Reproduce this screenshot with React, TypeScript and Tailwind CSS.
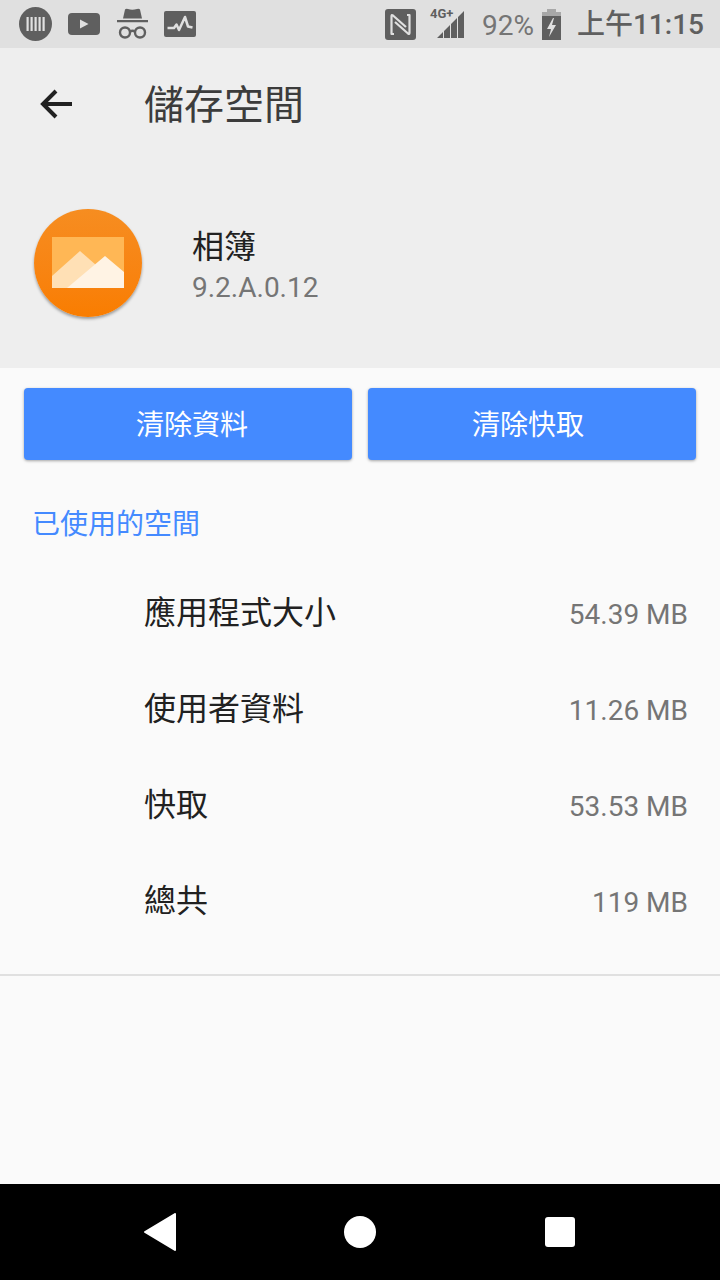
function StatusLeft() {
  return (
    <div className="flex items-center gap-[16px]">
      {/* notification icons */}
      <svg width="33" height="34" viewBox="0 0 33 34" fill="#5f5f5f">
        <ellipse cx="16.500" cy="17" rx="16.500" ry="17" />
        <path d="M7.500 10h2.200v14H7.500zM11.500 10h2.200v14h-2.200zM15.500 10h2.200v14h-2.200zM19.500 10h2.200v14h-2.200zM23.500 10h2.200v14h-2.200z" fill="#e0e0e0" />
      </svg>
      <svg width="32" height="24" viewBox="0 0 32 24">
        <rect width="32" height="22" y="1" rx="4" fill="#5f5f5f" />
        <path d="M12 7.500l8.500 4.500-8.500 4.500z" fill="#e0e0e0" />
      </svg>
      <svg width="33" height="34" viewBox="0 0 33 34" fill="#5f5f5f" className="-mr-[1px]">
        <path d="M9 2.500q1-1 3-.5 4 1.500 9 0 2-.5 3 .5l2 9H7zM1 13h31v2.200H1z" />
        <g fill="none" stroke="#5f5f5f" strokeWidth="2.400">
          <circle cx="9" cy="25.500" r="5" />
          <circle cx="24" cy="25.500" r="5" />
          <path d="M14 24.500q2.500-1.500 5 0" />
        </g>
      </svg>
      <svg width="32" height="26" viewBox="0 0 32 26">
        <rect width="32" height="26" rx="2" fill="#5f5f5f" />
        <path d="M3.500 17H10l2.500-3.500 2.500 5.500 6-13 3 9.500 4.500 1" fill="none" stroke="#e0e0e0" strokeWidth="2.500" strokeLinejoin="round" />
      </svg>
    </div>
  );
}

function StatusRight() {
  return (
    <div className="flex items-center">
      <svg width="31" height="31" viewBox="0 0 31 31" className="mr-[14px]">
        <rect width="31" height="31" rx="3" fill="#5f5f5f" />
        <g fill="none" stroke="#e0e0e0" strokeWidth="2.200" strokeLinejoin="round">
          <path d="M9 25H6.500V7q0-1.500 1.500-.5L21 18" />
          <path d="M22 6h2.500v18q0 1.500-1.500.5L10 13" />
        </g>
      </svg>
      <div className="relative w-[36px] h-[36px] mr-[16px]">
        <span className="absolute left-0 top-[1px] text-[13px] leading-[14px] font-bold text-[#5f5f5f]">4G+</span>
        <svg width="36" height="36" viewBox="0 0 36 36" fill="#5f5f5f">
          <path d="M7 32l6-6v6zM14 32V25l6-6v13zM21 32V18l6-6v20zM28 32V11l6-6v27z" />
        </svg>
      </div>
      <span className="text-[28px] leading-[34px] pt-[3px] text-[#757575] mr-[8px]">92%</span>
      <svg width="19" height="31" viewBox="0 0 19 31" className="mr-[16px]">
        <path d="M5 0h9v3h5v4H0V3h5z" fill="#a8a8a8" />
        <path d="M0 7h19v24H0z" fill="#5f5f5f" />
        <path d="M11 9L5 20h4l-2 8 7-12h-4l2-7z" fill="#e0e0e0" />
      </svg>
      <span className="text-[28px] leading-[34px] pt-[1px] font-medium text-[#5f5f5f]">上午11:15</span>
    </div>
  );
}

function AppIcon() {
  return (
    <div className="w-[108px] h-[108px] rounded-full bg-gradient-to-b from-[#f68d20] to-[#f97d00] shadow-[0_2px_3px_rgba(0,0,0,0.35)] flex items-center justify-center">
      <svg width="72" height="51" viewBox="0 0 72 51" className="mb-[2px]">
        <rect width="72" height="51" fill="#ffb755" />
        <path d="M0 39L28 14l16 14-28 23H0z" fill="#ffe0b5" />
        <path d="M15 51l38-32 19 16v16z" fill="#fff3e4" />
      </svg>
    </div>
  );
}

function StorageRow({ label, value }: { label: string; value: string }) {
  return (
    <div className="flex items-center justify-between h-[96px] pl-[144px] pr-[32px]">
      <span className="text-[32px] text-[#212121]">{label}</span>
      <span className="text-[28px] pt-[4px] text-[#757575]">{value}</span>
    </div>
  );
}

export default function App() {
  const rows = [
    { label: "應用程式大小", value: "54.39 MB" },
    { label: "使用者資料", value: "11.26 MB" },
    { label: "快取", value: "53.53 MB" },
    { label: "總共", value: "119 MB" },
  ];

  return (
    <div
      className="w-[720px] h-[1280px] flex flex-col overflow-hidden bg-[#fafafa]"
      style={{ fontFamily: 'Roboto, "Noto Sans CJK TC", sans-serif' }}
    >
      <div className="h-[48px] bg-[#e0e0e0] flex items-center justify-between pl-[19px] pr-[16px] shrink-0">
        <StatusLeft />
        <StatusRight />
      </div>

      <div className="h-[320px] bg-[#eeeeee] shrink-0 flex flex-col">
        <div className="h-[112px] flex items-center pl-[40px]">
          <svg width="32" height="32" viewBox="0 0 32 32" fill="none" stroke="#212121" strokeWidth="4">
            <path d="M33 16H3M16 3L3 16l13 13" />
          </svg>
          <span className="ml-[72px] pt-[4px] text-[40px] leading-[56px] text-[#3c3c3c]">儲存空間</span>
        </div>
        <div className="flex items-center pl-[34px] mt-[49px]">
          <AppIcon />
          <div className="ml-[50px] pt-[6px] flex flex-col">
            <span className="text-[32px] leading-[44px] text-[#212121]">相簿</span>
            <span className="text-[28px] leading-[38px] text-[#757575]">9.2.A.0.12</span>
          </div>
        </div>
      </div>

      <div className="flex-1 flex flex-col">
        <div className="flex gap-[16px] px-[24px] pt-[20px]">
          <button className="flex-1 h-[72px] pl-[8px] pt-[3px] rounded-[4px] bg-[#448aff] text-white text-[28px] shadow-[0_1px_3px_rgba(0,0,0,0.35)]">清除資料</button>
          <button className="flex-1 h-[72px] pr-[8px] pt-[3px] rounded-[4px] bg-[#448aff] text-white text-[28px] shadow-[0_1px_3px_rgba(0,0,0,0.35)]">清除快取</button>
        </div>
        <div className="pl-[32px] mt-[45px] h-[40px] leading-[40px] text-[28px] text-[#448aff]">已使用的空間</div>
        <div className="mt-[20px]">
          {rows.map((r) => (
            <StorageRow key={r.label} label={r.label} value={r.value} />
          ))}
        </div>
        <div className="mt-[25px] h-[2px] bg-[#e0e0e0]" />
      </div>

      <div className="h-[96px] bg-black shrink-0 flex items-center pl-[144px] gap-[168px]">
        <svg width="32" height="38" viewBox="0 0 32 38" fill="white" stroke="white" strokeWidth="2" strokeLinejoin="round">
          <path d="M31 1v36L1 19z" />
        </svg>
        <div className="w-[32px] h-[32px] rounded-full bg-white" />
        <div className="w-[30px] h-[30px] ml-[1px] rounded-[3px] bg-white" />
      </div>
    </div>
  );
}
